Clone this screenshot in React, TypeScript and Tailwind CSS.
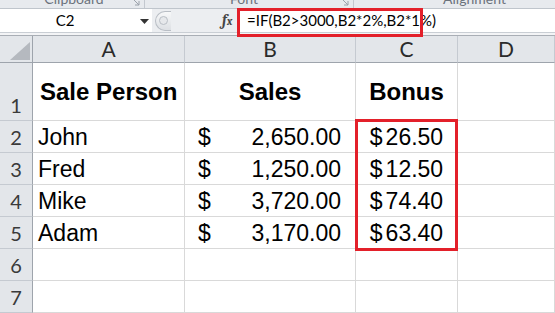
import React from 'react';

// Excel 2010 style sheet: formula bar + grid with a red highlight round C2:C5

const headerFont = { fontFamily: 'Lato, "Open Sans", sans-serif' };
const cellFont = { fontFamily: '"Liberation Sans", Arial, sans-serif' };

const rows = [
    { name: 'John', sales: '2,650.00', bonus: '26.50' },
    { name: 'Fred', sales: '1,250.00', bonus: '12.50' },
    { name: 'Mike', sales: '3,720.00', bonus: '74.40' },
    { name: 'Adam', sales: '3,170.00', bonus: '63.40' },
];

const Launcher = () => (
    <svg width="7" height="7" viewBox="0 0 7 7" className="absolute right-[4px] bottom-[2px]">
        <path d="M1 1 L6 6 M6 2 V6 H2" stroke="#9aa1aa" strokeWidth="1" fill="none" />
    </svg>
);

const RowNum = ({ n }: { n: number }) => (
    <div
        style={headerFont}
        className="flex items-end justify-center border-r border-b border-r-[#9ea4ac] border-b-[#c5cad1] bg-[#e3e6ea] pb-[2px] text-[20px] leading-[25px] text-[#3a3a3a]"
    >
        {n}
    </div>
);

const Cell = ({ className = '', children }: { className?: string; children?: React.ReactNode }) => (
    <div style={cellFont} className={`border-r border-b border-[#d9d9d9] text-[23px] text-black ${className}`}>
        {children}
    </div>
);

export default function App() {
    return (
        <div className="relative h-[313px] w-[555px] overflow-hidden bg-white">
            {/* Ribbon group labels, cut off at the top */}
            <div style={headerFont} className="flex h-[9px] overflow-hidden border-b border-[#bfc5cc] bg-[#e7eaee] text-[14px] leading-[18px] text-[#6b727c]">
                <div className="relative flex w-[145px] justify-center border-r border-[#c3c8cf]">
                    <span className="-mt-[10px] pl-[4px]">Clipboard</span>
                    <Launcher />
                </div>
                <div className="relative flex w-[209px] justify-center border-r border-[#c3c8cf]">
                    <span className="-mt-[10px] pr-[10px]">Font</span>
                    <Launcher />
                </div>
                <div className="flex flex-1 justify-center">
                    <span className="-mt-[10px] pl-[40px]">Alignment</span>
                </div>
            </div>

            {/* Formula bar */}
            <div className="flex h-[24px] border-b border-[#c9ced4] bg-[#eceef1]" style={headerFont}>
                <div className="relative flex w-[152px] items-center bg-white">
                    <span className="w-[130px] text-center text-[15px] text-black">C2</span>
                    <svg width="9" height="5" viewBox="0 0 9 5" className="absolute left-[140px] top-[10px]">
                        <path d="M0 0 H9 L4.5 5 Z" fill="#333" />
                    </svg>
                </div>
                <div className="flex w-[85px] items-center">
                    <div className="ml-[3px] flex h-[20px] w-[16px] items-center rounded-l-full border border-r-0 border-[#b9bec5] bg-gradient-to-b from-[#f7f8f9] to-[#dde0e4] pl-[3px]">
                        <div className="h-[9px] w-[9px] rounded-full border border-[#b9bec5] bg-[#e6e8eb]" />
                    </div>
                    <span className="ml-[51px] font-serif text-[15px] italic font-bold text-[#444]">
                        f<span className="text-[11px]">x</span>
                    </span>
                </div>
                <div className="flex flex-1 items-center bg-white pl-[10px] text-[15px] text-black">
                    =IF(B2&gt;3000,B2*2%,B2*1%)
                </div>
            </div>
            <div className="h-[3px] border-b border-[#a9aeb5] bg-[#f3f4f6]" />

            {/* Sheet grid */}
            <div className="grid grid-cols-[33px_152px_171px_102px_1fr] grid-rows-[27px_58px_32px_32px_32px_32px_32px_32px]">
                <div className="relative border-r border-b border-[#9ea4ac] bg-[#e3e6ea]">
                    <svg width="20" height="18" viewBox="0 0 20 18" className="absolute left-[10px] top-[6px]">
                        <path d="M20 0 V18 H0 Z" fill="#b5b9bf" />
                    </svg>
                </div>
                {['A', 'B', 'C', 'D'].map((c) => (
                    <div
                        key={c}
                        style={headerFont}
                        className="flex items-center justify-center border-r border-b border-r-[#c5cad1] border-b-[#9ea4ac] bg-[#e3e6ea] text-[21px] text-[#2b2b2b]"
                    >
                        {c}
                    </div>
                ))}

                <RowNum n={1} />
                <Cell className="flex items-center pl-[7px] text-[24px] font-bold">Sale Person</Cell>
                <Cell className="flex items-center justify-center text-[24px] font-bold">Sales</Cell>
                <Cell className="flex items-center justify-center text-[24px] font-bold">Bonus</Cell>
                <Cell />

                {rows.map((r, i) => (
                    <React.Fragment key={r.name}>
                        <RowNum n={i + 2} />
                        <Cell className="flex items-end pb-[2px] pl-[5px] leading-[25px]">{r.name}</Cell>
                        <Cell className="flex items-end justify-between pb-[2px] pl-[13px] pr-[14px] leading-[25px]">
                            <span>$</span>
                            <span>{r.sales}</span>
                        </Cell>
                        <Cell className="flex items-end justify-center pb-[2px] leading-[25px]">
                            <span className="mr-[3px]">$</span>
                            {r.bonus}
                        </Cell>
                        <Cell />
                    </React.Fragment>
                ))}

                {[6, 7].map((n) => (
                    <React.Fragment key={n}>
                        <RowNum n={n} />
                        <Cell />
                        <Cell />
                        <Cell />
                        <Cell />
                    </React.Fragment>
                ))}
            </div>

            {/* Red annotation boxes */}
            <div className="pointer-events-none absolute left-[237px] top-[8px] h-[29px] w-[186px] border-[3px] border-[#e3202a]" />
            <div className="pointer-events-none absolute left-[355px] top-[119px] h-[132px] w-[103px] border-[3px] border-[#e3202a]" />
        </div>
    );
}
